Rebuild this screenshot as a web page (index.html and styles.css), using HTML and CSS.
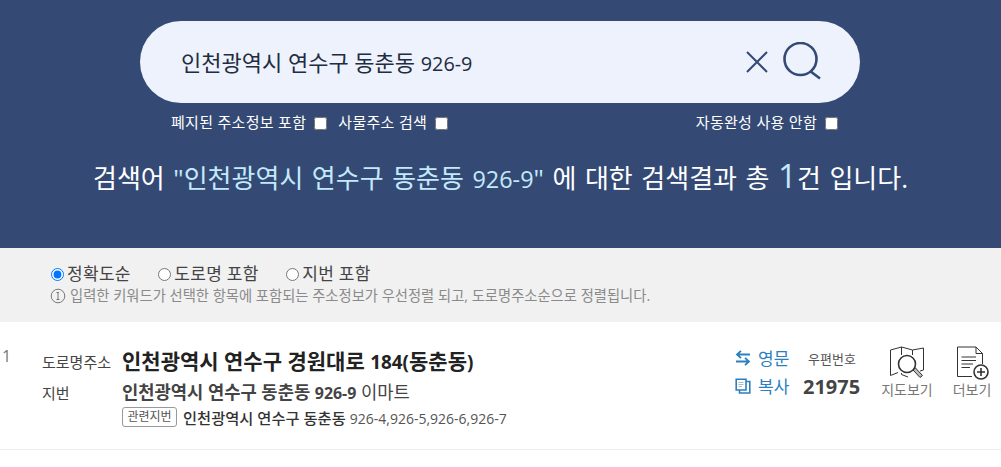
FILE: index.html
```html
<!DOCTYPE html>
<html lang="ko">
<head>
  <meta charset="utf-8">
  <title>도로명주소 검색</title>
  <link rel="stylesheet" href="styles.css">
</head>
<body>
  <header class="search-head">
    <div class="search-box">
      <span class="search-text">인천광역시 연수구 동춘동 <span class="num">926-9</span></span>
      <svg class="icon-clear" width="24" height="24" viewBox="0 0 24 24">
        <path d="M2 2 L22 22 M22 2 L2 22" fill="none" stroke="#344a75" stroke-width="2"/>
      </svg>
      <svg class="icon-search" width="40" height="40" viewBox="0 0 40 40">
        <circle cx="17.500" cy="17" r="16" fill="none" stroke="#344a75" stroke-width="2.600"/>
        <path d="M27 29 L37 36.500" fill="none" stroke="#344a75" stroke-width="2.600"/>
      </svg>
    </div>
    <div class="search-options">
      <div class="options-left">
        <label class="opt">폐지된 주소정보 포함 <input type="checkbox"></label>
        <label class="opt">사물주소 검색 <input type="checkbox"></label>
      </div>
      <label class="opt">자동완성 사용 안함 <input type="checkbox"></label>
    </div>
    <p class="result-count">검색어 <em>"인천광역시 연수구 동춘동 <span class="num">926-9</span>"</em> 에 대한 검색결과 총 <b>1</b>건 입니다.</p>
  </header>

  <section class="filter">
    <div class="filter-radios">
      <label class="radio"><input type="radio" name="sort" checked>정확도순</label>
      <label class="radio"><input type="radio" name="sort">도로명 포함</label>
      <label class="radio"><input type="radio" name="sort">지번 포함</label>
    </div>
    <p class="filter-note">
      <svg width="16" height="16" viewBox="0 0 16 16">
        <circle cx="8" cy="8" r="6.800" fill="none" stroke="#777" stroke-width="1"/>
        <path d="M6.500 4.500 H9 M8 4.500 V11.500 M6.500 11.500 H9.500" fill="none" stroke="#777" stroke-width="1"/>
      </svg>
      입력한 키워드가 선택한 항목에 포함되는 주소정보가 우선정렬 되고, 도로명주소순으로 정렬됩니다.
    </p>
  </section>

  <section class="result">
    <div class="result-no">1</div>
    <div class="result-addr">
      <div class="addr-row">
        <span class="addr-label">도로명주소</span>
        <strong class="addr-road">인천광역시 연수구 경원대로 <span class="num">184(</span>동춘동<span class="num">)</span></strong>
      </div>
      <div class="addr-row jibun-row">
        <span class="addr-label">지번</span>
        <span class="addr-jibun"><b>인천광역시 연수구 동춘동 <span class="num">926-9</span></b> 이마트</span>
      </div>
      <div class="addr-row related-row">
        <span class="related-tag">관련지번</span>
        <span class="related-text"><b>인천광역시 연수구 동춘동</b> <span class="related-nums">926-4,926-5,926-6,926-7</span></span>
      </div>
    </div>
    <div class="result-links">
      <a class="link">
        <svg width="16" height="16" viewBox="0 0 16 16">
          <path d="M15 4.500 H2 M6 0.800 L2 4.500 L6 8.200 M1 11.500 H14 M10 7.800 L14 11.500 L10 15.200" fill="none" stroke="#2b80bd" stroke-width="1.800"/>
        </svg>
        영문
      </a>
      <a class="link">
        <svg width="16" height="16" viewBox="0 0 16 16">
          <path d="M11 3.500 H14.800 V15 H4.500 V12" fill="none" stroke="#2b80bd" stroke-width="1.600"/>
          <path d="M1.200 1.200 H11 V12 H1.200 Z" fill="none" stroke="#2b80bd" stroke-width="1.600"/>
          <path d="M3.500 4.500 H8.500 M3.500 6.500 H8.500 M3.500 8.500 H7" fill="none" stroke="#aab8c2" stroke-width="1"/>
        </svg>
        복사
      </a>
    </div>
    <div class="zip">
      <span class="zip-label">우편번호</span>
      <strong class="zip-code">21975</strong>
    </div>
    <div class="tool map-tool">
      <svg width="36" height="34" viewBox="0 0 36 34">
        <path d="M9 26.500 L1.500 29.500 V4 L12.500 1 L23.500 4 L34.500 2 V24 L31 25 M12.500 1 V9 M23.500 4 V9" fill="none" stroke="#333" stroke-width="1"/>
        <path d="M12.500 27 V28.500 L19 31" fill="none" stroke="#333" stroke-width="1"/>
        <path d="M24 24 L31 31.500 L33.500 29.500 L26.500 22 Z" fill="#bbb" stroke="#333" stroke-width="1"/>
        <circle cx="18" cy="18" r="8.500" fill="#fff" stroke="#333" stroke-width="1.600"/>
      </svg>
      <span>지도보기</span>
    </div>
    <div class="tool more-tool">
      <svg width="34" height="34" viewBox="0 0 34 34">
        <path d="M17 30.500 H2.500 V1 H21 L27.500 7.500 V18 M21 1 V7.500 H27.500" fill="none" stroke="#333" stroke-width="1"/>
        <path d="M6.500 11 H21 M6.500 14.500 H21 M6.500 18 H18 M6.500 21.500 H15" fill="none" stroke="#333" stroke-width="1"/>
        <circle cx="26" cy="26" r="7" fill="#fff" stroke="#333" stroke-width="1.600"/>
        <path d="M26 22 V30 M22 26 H30" fill="none" stroke="#333" stroke-width="1.600"/>
      </svg>
      <span>더보기</span>
    </div>
  </section>
</body>
</html>
```

FILE: styles.css
```css
body {
  margin: 0;
  font-family: "Open Sans", "Noto Sans CJK KR", sans-serif;
  background-color: white;
  color: #333;
}

/* hangul sits larger than the digits next to it */
.num {
  font-size: 0.9em;
}

.search-head {
  height: 248px;
  background-color: #344a75;
  padding-top: 21px;
  box-sizing: border-box;
}

.search-box {
  width: 720px;
  height: 82px;
  margin-left: 140px;
  padding: 0 37px 0 41px;
  box-sizing: border-box;
  display: flex;
  align-items: center;
  background-color: #edf2fc;
  border-radius: 41px;
}

.search-text {
  flex: 1;
  padding-bottom: 3px;
  font-size: 22px;
  color: #222c40;
}

.icon-clear {
  margin-right: 14px;
}

.search-options {
  width: 668px;
  margin: 8px 0 0 171px;
  display: flex;
  justify-content: space-between;
  color: white;
  font-size: 15px;
  letter-spacing: 0.300px;
  line-height: 22px;
}

.options-left {
  display: flex;
  gap: 10px;
}

.opt {
  display: flex;
  align-items: center;
  gap: 5px;
}

.opt input {
  margin: 2px 1px 0 3px;
}

.result-count {
  margin: 26px 0 0;
  text-align: center;
  color: white;
  font-size: 26px;
  word-spacing: 1.800px;
  line-height: 34px;
}

.result-count em {
  font-style: normal;
  color: #c3e9fb;
}

.result-count b {
  font-weight: normal;
  font-size: 33px;
  color: #c3e9fb;
}

.filter {
  height: 74px;
  background-color: #f1f1f1;
  padding: 15px 0 0 50px;
  box-sizing: border-box;
}

.filter-radios {
  display: flex;
  gap: 26.500px;
  font-size: 17px;
  letter-spacing: 0.300px;
  line-height: 22px;
  color: #444;
}

.radio {
  display: flex;
  align-items: center;
}

.radio input {
  margin: 1px 3px 0 1px;
}

.filter-note {
  margin: 1px 0 0;
  display: flex;
  align-items: center;
  gap: 4px;
  font-size: 14.300px;
  line-height: 19px;
  color: #8a8a8a;
}

.result {
  height: 128px;
  border-bottom: 1px solid #eee;
  box-sizing: border-box;
  display: flex;
}

.result-no {
  width: 42px;
  padding: 25px 0 0 2px;
  box-sizing: border-box;
  font-size: 16px;
  line-height: 18px;
  color: #777;
}

.result-addr {
  width: 693px;
  padding-top: 26px;
  box-sizing: border-box;
}

.addr-row {
  display: flex;
  align-items: center;
}

.addr-label {
  width: 80px;
  font-size: 15px;
  color: #444;
}

.addr-road {
  font-size: 21px;
  line-height: 26px;
  color: #222;
}

.jibun-row {
  margin-top: 6px;
}

.addr-jibun {
  font-size: 17.700px;
  line-height: 22px;
  color: #444;
}

.related-row {
  margin: 2px 0 0 80px;
}

.related-tag {
  width: 55px;
  height: 20px;
  margin-right: 6px;
  box-sizing: border-box;
  border: 1px solid #999;
  border-radius: 3px;
  font-size: 12px;
  line-height: 18px;
  text-align: center;
  color: #555;
}

.related-text {
  font-size: 15.300px;
  color: #555;
}

.related-text b {
  font-weight: 500;
  color: #333;
}

.related-nums {
  font-size: 14px;
}

.result-links {
  width: 68px;
  padding-top: 23px;
  box-sizing: border-box;
}

.link {
  display: flex;
  align-items: center;
  gap: 7px;
  height: 25px;
  margin-bottom: 3px;
  font-size: 17px;
  color: #2b80bd;
}

.zip {
  width: 78px;
  padding-top: 28px;
  box-sizing: border-box;
  display: flex;
  flex-direction: column;
}

.zip-label {
  margin-left: 5px;
  font-size: 13px;
  line-height: 18px;
  color: #555;
}

.zip-code {
  margin-top: 8px;
  font-size: 20px;
  line-height: 22px;
  color: #444;
}

.tool {
  padding-top: 24px;
  box-sizing: border-box;
  display: flex;
  flex-direction: column;
  align-items: center;
  font-size: 14px;
  color: #777;
}

.tool span {
  line-height: 18px;
  margin-top: 1px;
  white-space: nowrap;
}

.map-tool {
  width: 52px;
}

.more-tool {
  width: 38px;
  margin-left: 20px;
}
```
